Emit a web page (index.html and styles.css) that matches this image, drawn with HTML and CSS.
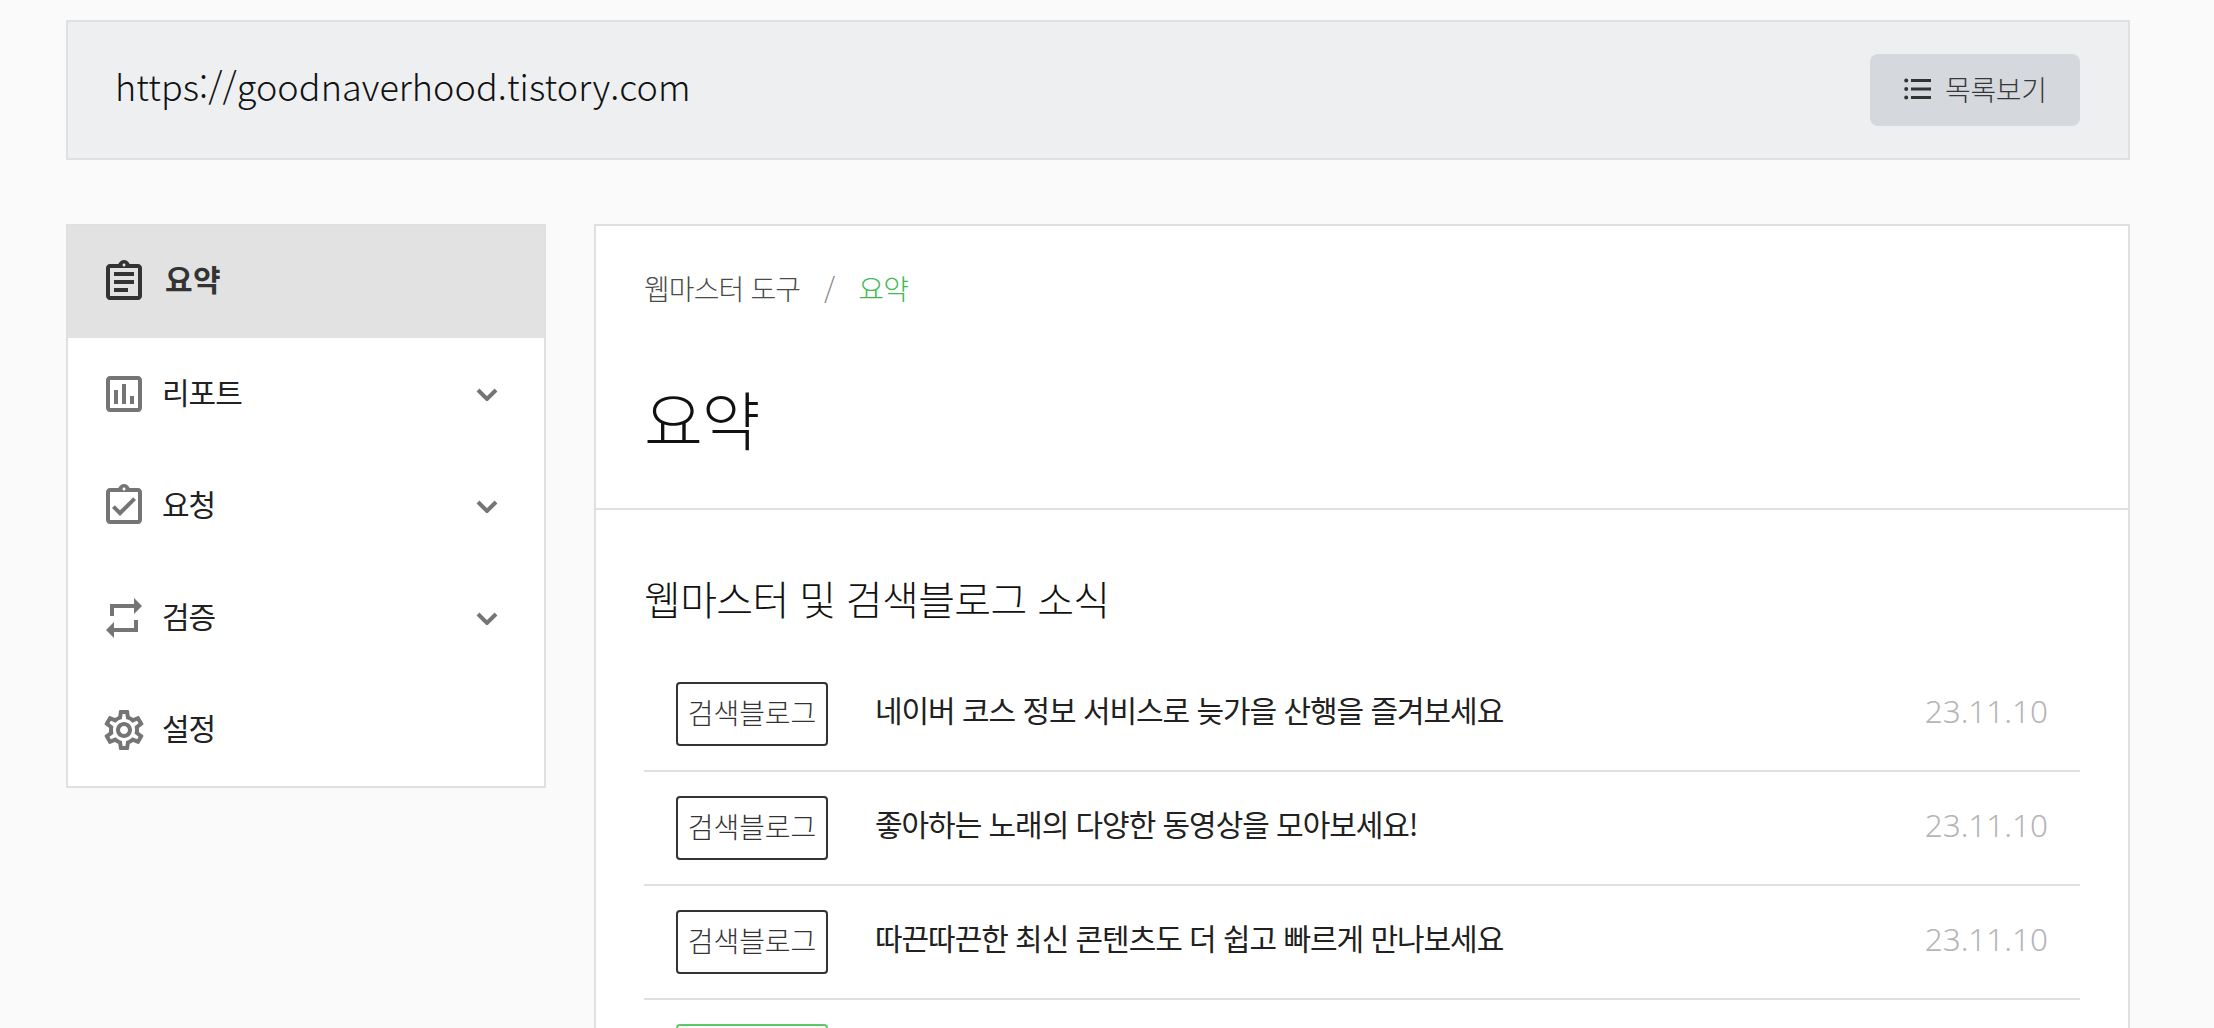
FILE: index.html
```html
<!DOCTYPE html>
<html lang="ko">
<head>
<meta charset="utf-8">
<title>웹마스터 도구 - 요약</title>
<link rel="stylesheet" href="styles.css">
</head>
<body>
<header class="site-bar">
  <span class="site-url">https://goodnaverhood.tistory.com</span>
  <button class="list-btn" type="button">
    <svg class="list-icon" viewBox="0 0 27 22" aria-hidden="true"><circle cx="2.2" cy="2.5" r="2"/><circle cx="2.2" cy="11" r="2"/><circle cx="2.2" cy="19.5" r="2"/><rect x="7" y="1" width="20" height="3"/><rect x="7" y="9.5" width="20" height="3"/><rect x="7" y="18" width="20" height="3"/></svg>
    <span>목록보기</span>
  </button>
</header>
<div class="layout">
  <nav class="side">
    <a class="side-item active">
      <svg class="side-icon" viewBox="0 0 24 24"><path d="M7 7h10v2H7zm0 4h10v2H7zm0 4h7v2H7zM19 3h-4.18C14.4 1.84 13.3 1 12 1c-1.3 0-2.4.84-2.82 2H5c-1.1 0-2 .9-2 2v14c0 1.1.9 2 2 2h14c1.1 0 2-.9 2-2V5c0-1.1-.9-2-2-2zm-7-.25c.41 0 .75.34.75.75s-.34.75-.75.75-.75-.34-.75-.75.34-.75.75-.75zM19 19H5V5h14v14z"/></svg>
      <span class="side-label">요약</span>
    </a>
    <a class="side-item">
      <svg class="side-icon" viewBox="0 0 24 24"><path d="M19 3H5c-1.1 0-2 .9-2 2v14c0 1.1.9 2 2 2h14c1.1 0 2-.9 2-2V5c0-1.1-.9-2-2-2zm0 16H5V5h14v14zM7 10h2v7H7zm4-3h2v10h-2zm4 6h2v4h-2z"/></svg>
      <span class="side-label">리포트</span>
      <svg class="chev" viewBox="0 0 22 13"><path d="M2 2l9 9 9-9"/></svg>
    </a>
    <a class="side-item">
      <svg class="side-icon" viewBox="0 0 24 24"><path d="M18 9l-1.41-1.42L10 14.17l-2.59-2.58L6 13l4 4zm1-6h-4.18C14.4 1.84 13.3 1 12 1c-1.3 0-2.4.84-2.82 2H5c-1.1 0-2 .9-2 2v14c0 1.1.9 2 2 2h14c1.1 0 2-.9 2-2V5c0-1.1-.9-2-2-2zm-7-.25c.41 0 .75.34.75.75s-.34.75-.75.75-.75-.34-.75-.75.34-.75.75-.75zM19 19H5V5h14v14z"/></svg>
      <span class="side-label">요청</span>
      <svg class="chev" viewBox="0 0 22 13"><path d="M2 2l9 9 9-9"/></svg>
    </a>
    <a class="side-item">
      <svg class="side-icon" viewBox="0 0 24 24"><path d="M7 7h10v3l4-4-4-4v3H5v6h2V7zm10 10H7v-3l-4 4 4 4v-3h12v-6h-2v4z"/></svg>
      <span class="side-label">검증</span>
      <svg class="chev" viewBox="0 0 22 13"><path d="M2 2l9 9 9-9"/></svg>
    </a>
    <a class="side-item">
      <svg class="side-icon" viewBox="0 0 24 24"><path d="M19.43 12.98c.04-.32.07-.64.07-.98 0-.34-.03-.66-.07-.98l2.11-1.65c.19-.15.24-.42.12-.64l-2-3.46c-.09-.16-.26-.25-.44-.25-.06 0-.12.01-.17.03l-2.49 1c-.52-.4-1.08-.73-1.69-.98l-.38-2.65C14.46 2.18 14.25 2 14 2h-4c-.25 0-.46.18-.49.42l-.38 2.65c-.61.25-1.17.59-1.69.98l-2.49-1c-.06-.02-.12-.03-.18-.03-.17 0-.34.09-.43.25l-2 3.46c-.13.22-.07.49.12.64l2.11 1.65c-.04.32-.07.65-.07.98 0 .33.03.66.07.98l-2.11 1.65c-.19.15-.24.42-.12.64l2 3.46c.09.16.26.25.44.25.06 0 .12-.01.17-.03l2.49-1c.52.4 1.08.73 1.69.98l.38 2.65c.03.24.24.42.49.42h4c.25 0 .46-.18.49-.42l.38-2.65c.61-.25 1.17-.59 1.69-.98l2.49 1c.06.02.12.03.18.03.17 0 .34-.09.43-.25l2-3.46c.12-.22.07-.49-.12-.64l-2.11-1.65zm-1.98-1.71c.04.31.05.52.05.73 0 .21-.02.43-.05.73l-.14 1.13.89.7 1.08.84-.7 1.21-1.27-.51-1.04-.42-.9.68c-.43.32-.84.56-1.25.73l-1.06.43-.16 1.13-.2 1.35h-1.4l-.19-1.35-.16-1.13-1.06-.43c-.43-.18-.83-.41-1.23-.71l-.91-.7-1.06.43-1.27.51-.7-1.21 1.08-.84.89-.7-.14-1.13c-.03-.31-.05-.54-.05-.74s.02-.43.05-.73l.14-1.13-.89-.7-1.08-.84.7-1.21 1.27.51 1.04.42.9-.68c.43-.32.84-.56 1.25-.73l1.06-.43.16-1.13.2-1.35h1.39l.19 1.35.16 1.13 1.06.43c.43.18.83.41 1.23.71l.91.7 1.06-.43 1.27-.51.7 1.21-1.07.85-.89.7.14 1.13zM12 8c-2.21 0-4 1.79-4 4s1.79 4 4 4 4-1.79 4-4-1.79-4-4-4zm0 6c-1.1 0-2-.9-2-2s.9-2 2-2 2 .9 2 2-.9 2-2 2z"/></svg>
      <span class="side-label">설정</span>
    </a>
  </nav>
  <main class="panel">
    <div class="panel-head">
      <div class="crumbs"><span>웹마스터 도구</span><span class="crumb-sep">/</span><span class="crumb-now">요약</span></div>
      <h1 class="title">요약</h1>
    </div>
    <section class="news">
      <h2 class="news-title">웹마스터 및 검색블로그 소식</h2>
      <ul class="news-list">
        <li class="news-row"><span class="tag">검색블로그</span><span class="news-text">네이버 코스 정보 서비스로 늦가을 산행을 즐겨보세요</span><span class="news-date">23.11.10</span></li>
        <li class="news-row"><span class="tag">검색블로그</span><span class="news-text">좋아하는 노래의 다양한 동영상을 모아보세요!</span><span class="news-date">23.11.10</span></li>
        <li class="news-row"><span class="tag">검색블로그</span><span class="news-text">따끈따끈한 최신 콘텐츠도 더 쉽고 빠르게 만나보세요</span><span class="news-date">23.11.10</span></li>
        <li class="news-row"><span class="tag tag-green"></span></li>
      </ul>
    </section>
  </main>
</div>
</body>
</html>
```

FILE: styles.css
```css
* { box-sizing: border-box; }
html, body { margin: 0; height: 1028px; overflow: hidden; }
body {
  background: #fafafa;
  color: #212121;
  font-family: "Noto Sans CJK KR", "Noto Sans", sans-serif;
  padding: 20px 84px 0 66px;
}
.site-bar {
  display: flex;
  align-items: center;
  justify-content: space-between;
  height: 140px;
  padding: 0 48px 0 47px;
  background: #edeff1;
  border: 2px solid #e0e0e0;
}
.site-url { margin-bottom: 10px; font-size: 36px; font-weight: 300; letter-spacing: .06px; color: #111; }
.list-btn {
  display: flex;
  align-items: center;
  gap: 14px;
  width: 210px;
  height: 72px;
  padding: 0 0 2px 34px;
  border: 0;
  border-radius: 8px;
  background: #d5d8dc;
  color: #383838;
  font: inherit;
  font-size: 28px;
  font-weight: 300;
  letter-spacing: -.35px;
}
.list-icon { width: 27px; height: 22px; fill: #333; flex: none; }
.layout { display: flex; align-items: flex-start; gap: 48px; margin-top: 64px; }
.side {
  width: 480px;
  flex: none;
  background: #fff;
  border: 2px solid #e0e0e0;
}
.side-item {
  display: flex;
  align-items: center;
  height: 112px;
  padding: 0 46px 0 32px;
  font-size: 30px;
  color: #212121;
}
.side-item.active { background: #e2e2e2; font-weight: 700; color: #333; }
.side-icon { width: 48px; height: 48px; flex: none; fill: #757575; }
.active .side-icon { fill: #333; }
.side-label { margin: 0 0 6px 14px; flex: 1; letter-spacing: -1px; }
.active .side-label { margin: 0 0 8px 17px; letter-spacing: .3px; }
.chev { width: 22px; height: 13px; fill: none; stroke: #757575; stroke-width: 4; flex: none; }
.panel {
  flex: 1;
  min-height: 900px;
  background: #fff;
  border: 2px solid #e0e0e0;
}
.panel-head { height: 284px; padding: 42px 48px 0; border-bottom: 2px solid #e0e0e0; }
.crumbs { display: flex; align-items: center; gap: 24px; font-size: 28px; font-weight: 300; color: #4a4a4a; letter-spacing: -.9px; line-height: 40px; }
.crumb-sep { color: #8a8a8a; }
.crumb-now { color: #3fbb52; }
.title { margin: 64px 0 0; font-size: 64px; font-weight: 300; line-height: 90px; letter-spacing: -1.5px; color: #111; }
.news { padding: 59px 48px 0; }
.news-title { margin: 0; font-size: 40px; font-weight: 300; line-height: 58px; letter-spacing: -.65px; color: #111; }
.news-list { list-style: none; margin: 31px 0 0; padding: 0; }
.news-row {
  display: flex;
  align-items: center;
  height: 114px;
  padding: 0 32px;
  border-bottom: 2px solid #e0e0e0;
}
.tag {
  display: flex;
  align-items: center;
  justify-content: center;
  width: 152px;
  height: 64px;
  flex: none;
  border: 2px solid #333;
  border-radius: 4px;
  padding-bottom: 4px;
  font-size: 28px;
  font-weight: 300;
  letter-spacing: -.1px;
  color: #333;
}
.tag-green { border-color: #5cc96b; }
.news-text { margin: 0 0 10px 47px; flex: 1; font-size: 30px; font-weight: 400; letter-spacing: -1.05px; }
.news-date { margin-bottom: 8px; font-size: 31.5px; font-weight: 300; color: #b5b5b5; font-family: "Noto Sans", sans-serif; }
```
